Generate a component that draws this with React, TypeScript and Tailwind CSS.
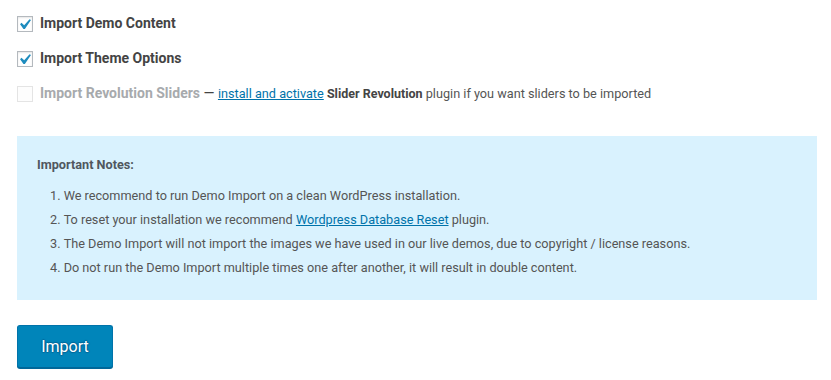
import React from "react";

function Check() {
  return (
    <svg
      className="absolute left-[-4px] top-[-3px] h-[21px] w-[21px]"
      viewBox="0 0 20 20"
      aria-hidden="true"
    >
      <path
        d="M14.83 4.89l1.34.94-5.81 8.38H9.02L5.78 9.67l1.34-1.25 2.57 2.4z"
        fill="#1e8cbe"
      />
    </svg>
  );
}

function Box({ checked, disabled }: { checked?: boolean; disabled?: boolean }) {
  return (
    <span
      className={
        disabled
          ? "relative inline-block h-4 w-4 shrink-0 border border-[#e4e4e4] bg-[#fdfdfd]"
          : "relative inline-block h-4 w-4 shrink-0 border border-[#b4b9be] bg-white shadow-[inset_0_1px_2px_rgba(0,0,0,0.1)]"
      }
    >
      {checked && <Check />}
    </span>
  );
}

export default function App() {
  return (
    <div
      className="min-h-[380px] w-[831px] bg-white pl-[17px] pr-[14px] pt-[6px] text-[#444]"
      style={{ fontFamily: "Roboto, 'Noto Sans', sans-serif" }}
    >
      <label className="flex h-[35px] items-center gap-[7px] text-[14px] font-bold">
        <Box checked />
        <span>Import Demo Content</span>
      </label>
      <label className="flex h-[35px] items-center gap-[7px] text-[14px] font-bold">
        <Box checked />
        <span>Import Theme Options</span>
      </label>
      <div className="flex h-[35px] items-center gap-[7px] text-[14px]">
        <Box disabled />
        <span>
          <span className="font-bold text-[#a7aaad]">Import Revolution Sliders</span>
          <span className="text-[14px] text-[#444]"> — </span>
          <a href="#" className="text-[12.7px] text-[#0073aa] underline">
            install and activate
          </a>
          <span className="text-[12.7px]"> </span>
          <span className="text-[12.5px] font-bold">Slider Revolution</span>
          <span className="text-[12.7px] text-[#555]"> plugin if you want sliders to be imported</span>
        </span>
      </div>

      <div className="mt-[25px] h-[164px] bg-[#d9f2fe] px-5 pt-[17px] text-[12.7px] text-[#555]">
        <div className="h-6 leading-6 font-bold text-[#50575e]">Important Notes:</div>
        <ol className="mt-[7px] list-inside list-decimal pl-[13px] leading-6">
          <li>We recommend to run Demo Import on a clean WordPress installation.</li>
          <li>
            To reset your installation we recommend{" "}
            <a href="#" className="text-[#0073aa] underline">
              Wordpress Database Reset
            </a>{" "}
            plugin.
          </li>
          <li>
            The Demo Import will not import the images we have used in our live demos, due to
            copyright / license reasons.
          </li>
          <li>
            Do not run the Demo Import multiple times one after another, it will result in double
            content.
          </li>
        </ol>
      </div>

      <button
        type="button"
        className="mt-[25px] h-[43px] w-[96px] rounded-[3px] border border-[#0073aa] border-b-[#006799] bg-[#0085ba] text-[16px] text-white shadow-[0_1px_0_#006799] [text-shadow:0_-1px_1px_#006799,1px_0_1px_#006799,0_1px_1px_#006799,-1px_0_1px_#006799]"
      >
        Import
      </button>
    </div>
  );
}
